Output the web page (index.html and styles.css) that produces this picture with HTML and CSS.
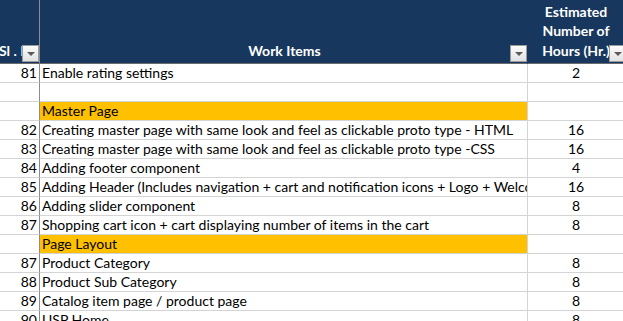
FILE: index.html
```html
<!DOCTYPE html>
<html>
<head>
<meta charset="utf-8">
<link rel="stylesheet" href="styles.css">
</head>
<body>
<div class="sheet">
  <div class="row head">
    <div class="cell a"><span class="sl">Sl . No</span><span class="dd"></span></div>
    <div class="cell b"><span class="htext">Work Items</span><span class="dd"></span></div>
    <div class="cell c"><span class="htext">Estimated<br>Number of<br>Hours (Hr.)</span><span class="dd"></span></div>
  </div>
  <div class="row"><div class="cell a">81</div><div class="cell b">Enable rating settings</div><div class="cell c">2</div></div>
  <div class="row"><div class="cell a"></div><div class="cell b"></div><div class="cell c"></div></div>
  <div class="row"><div class="cell a"></div><div class="cell b sec">Master Page</div><div class="cell c"></div></div>
  <div class="row"><div class="cell a">82</div><div class="cell b">Creating master page with same look and feel as clickable proto type - HTML</div><div class="cell c">16</div></div>
  <div class="row"><div class="cell a">83</div><div class="cell b">Creating master page with same look and feel as clickable proto type -CSS</div><div class="cell c">16</div></div>
  <div class="row"><div class="cell a">84</div><div class="cell b">Adding footer component</div><div class="cell c">4</div></div>
  <div class="row"><div class="cell a">85</div><div class="cell b">Adding Header (Includes navigation + cart and notification icons + Logo + Welcome message)</div><div class="cell c">16</div></div>
  <div class="row"><div class="cell a">86</div><div class="cell b">Adding slider component</div><div class="cell c">8</div></div>
  <div class="row"><div class="cell a">87</div><div class="cell b">Shopping cart icon + cart displaying number of items in the cart</div><div class="cell c">8</div></div>
  <div class="row"><div class="cell a"></div><div class="cell b sec">Page Layout</div><div class="cell c"></div></div>
  <div class="row"><div class="cell a">87</div><div class="cell b">Product Category</div><div class="cell c">8</div></div>
  <div class="row"><div class="cell a">88</div><div class="cell b">Product Sub Category</div><div class="cell c">8</div></div>
  <div class="row"><div class="cell a">89</div><div class="cell b">Catalog item page / product page</div><div class="cell c">8</div></div>
  <div class="row"><div class="cell a">90</div><div class="cell b">USP Home</div><div class="cell c">8</div></div>
</div>
</body>
</html>
```
FILE: styles.css
```css
html, body {
  margin: 0;
  padding: 0;
  background: #ffffff;
  overflow: hidden;
}
.sheet {
  width: 623px;
  font-family: Lato, "Liberation Sans", sans-serif;
  font-size: 14px;
  color: #000;
}
.row {
  display: grid;
  grid-template-columns: 40px 488px 96px;
  height: 19px;
}
.cell {
  box-sizing: border-box;
  border-bottom: 1px solid #d4d4d4;
  border-right: 1px solid #d4d4d4;
  white-space: nowrap;
  overflow: hidden;
  line-height: 18px;
}
.cell.a {
  border-right-color: #8c8c8c;
  text-align: right;
  padding-right: 2px;
}
.cell.b {
  padding-left: 2px;
}
.cell.c {
  text-align: center;
  border-right: none;
}
.cell.b.sec {
  background: #ffc000;
}
.row.head {
  height: 64px;
  background: #17375e;
  color: #fff;
  font-weight: bold;
}
.head .cell {
  position: relative;
  border-bottom: 1px solid #6b6b6b;
  border-right-color: #17375e;
  line-height: 19.5px;
  display: flex;
  align-items: flex-end;
  justify-content: center;
  padding-bottom: 3px;
}
.head .cell.a {
  border-right-color: #8c8c8c;
  justify-content: flex-start;
  padding: 0 0 3px 0;
}
.sl {
  margin-left: -1px;
}
.head .cell.c {
  padding-left: 0;
  padding-right: 0;
}
.htext {
  text-align: center;
}
.dd {
  position: absolute;
  right: 0;
  bottom: 1px;
  width: 17px;
  height: 17px;
  box-sizing: border-box;
  border: 1px solid #9a9a9a;
  background: linear-gradient(#fbfbfb, #e2e2e2);
}
.dd::after {
  content: "";
  position: absolute;
  left: 4px;
  top: 6px;
  border-left: 4px solid transparent;
  border-right: 4px solid transparent;
  border-top: 4px solid #5a5a5a;
}
.head .cell.c .dd {
  right: auto;
  left: 81px;
}
```
